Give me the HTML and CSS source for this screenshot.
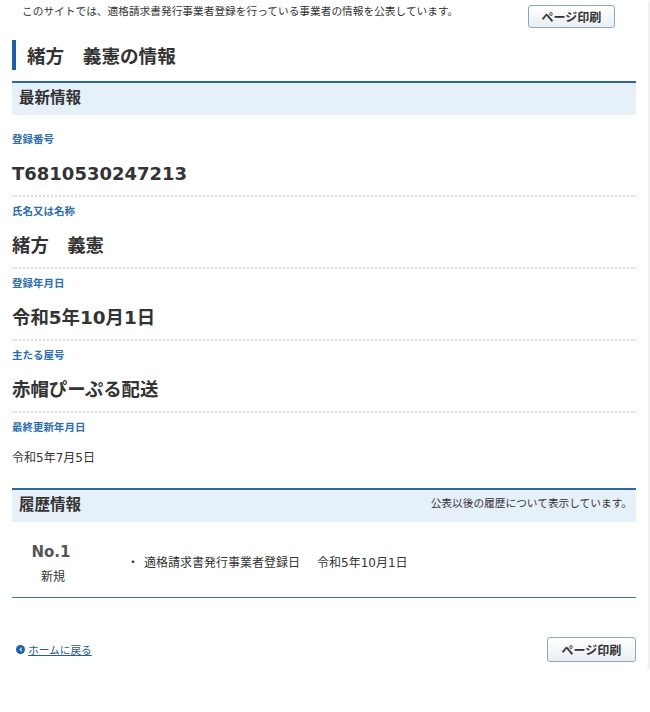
FILE: index.html
```html
<!DOCTYPE html>
<html lang="ja">
<head>
<meta charset="utf-8">
<title>公表情報</title>
<link rel="stylesheet" href="styles.css">
</head>
<body>

<div class="container">
  <div class="top-bar">
    <p class="lead">このサイトでは、適格請求書発行事業者登録を行っている事業者の情報を公表しています。</p>
    <button class="print-btn top-print" type="button">ページ印刷</button>
  </div>

  <h2 class="page-title">緒方　義憲の情報</h2>

  <div class="section-head">
    <h3>最新情報</h3>
  </div>

  <dl class="info-list">
    <div class="info-item">
      <dt>登録番号</dt>
      <dd class="big num">T6810530247213</dd>
    </div>
    <div class="info-item">
      <dt>氏名又は名称</dt>
      <dd class="big">緒方　義憲</dd>
    </div>
    <div class="info-item">
      <dt>登録年月日</dt>
      <dd class="big">令和5年10月1日</dd>
    </div>
    <div class="info-item">
      <dt>主たる屋号</dt>
      <dd class="big">赤帽ぴーぷる配送</dd>
    </div>
    <div class="info-item last">
      <dt>最終更新年月日</dt>
      <dd class="small">令和5年7月5日</dd>
    </div>
  </dl>

  <div class="section-head history-head">
    <h3>履歴情報</h3>
    <span class="note">公表以後の履歴について表示しています。</span>
  </div>

  <div class="history-row">
    <div class="history-no">
      <div class="no">No.1</div>
      <div class="kind">新規</div>
    </div>
    <div class="history-text">
      <span class="dot">・</span>適格請求書発行事業者登録日<span class="date">令和5年10月1日</span>
    </div>
  </div>

  <div class="footer">
    <a class="back-link" href="#"><span class="back-icon"></span>ホームに戻る</a>
    <button class="print-btn bottom-print" type="button">ページ印刷</button>
  </div>
</div>

</body>
</html>
```

FILE: styles.css
```css
body {
  font-family: "DejaVu Sans", "Noto Sans CJK JP", sans-serif;
  background-color: #fff;
  color: #333;
  margin: 0;
  padding: 0;
}

.container {
  width: 624px;
  padding: 0 12px 8px;
  background-color: #fff;
  border-radius: 0 0 4px 0;
  box-shadow: 1px 1px 4px rgba(0, 0, 0, 0.12);
}

.top-bar {
  display: flex;
  justify-content: space-between;
  align-items: flex-start;
  padding-top: 5px;
}

.lead {
  margin: 0 0 0 10px;
  font-size: 10.7px;
  line-height: 14px;
}

.print-btn {
  font-family: "Noto Sans CJK JP", sans-serif;
  font-weight: bold;
  font-size: 12px;
  color: #333;
  background: linear-gradient(#ffffff, #e9eef3);
  border: 1px solid #8ba8bf;
  border-radius: 3px;
  cursor: pointer;
  padding: 0;
}

.top-print {
  width: 87px;
  height: 23px;
  margin-right: 21px;
}

.bottom-print {
  width: 89px;
  height: 25px;
}

.page-title {
  margin: 12px 0 0;
  padding-left: 11px;
  border-left: 4px solid #1f5fa6;
  font-size: 18.6px;
  line-height: 30px;
  font-family: "Noto Sans CJK JP", sans-serif;
}

.section-head {
  display: flex;
  justify-content: space-between;
  align-items: center;
  box-sizing: border-box;
  margin-top: 11px;
  height: 34px;
  padding: 0 4px 7px 7px;
  background-color: #e6f0f9;
  border-top: 2px solid #2b67a2;
}

.section-head h3 {
  margin: 0;
  font-size: 15.5px;
  font-family: "Noto Sans CJK JP", sans-serif;
}

.note {
  font-size: 10.7px;
}

.info-list {
  margin: 10px 0 0;
}

.info-item {
  padding: 6px 0 9px;
  border-bottom: 2px dotted #dcdcdc;
}

.info-item dt {
  font-size: 10.5px;
  line-height: 16px;
  font-weight: bold;
  color: #2f6ead;
  font-family: "Noto Sans CJK JP", sans-serif;
}

.info-item dd {
  margin: 0;
}

.big {
  margin-top: 14px !important;
  font-size: 18.4px;
  line-height: 25px;
  font-weight: bold;
}

.big.num {
  font-size: 18px;
}

.small {
  margin-top: 13px !important;
  font-size: 12px;
  line-height: 20px;
}

.info-item.last {
  padding-bottom: 0;
  border-bottom: none;
}

.history-head {
  margin-top: 20px;
}

.history-row {
  display: flex;
  align-items: center;
  padding: 20px 0 10px;
  border-bottom: 1px solid #3f78b0;
}

.history-no {
  width: 82px;
  text-align: center;
}

.no {
  font-size: 15px;
  line-height: 20px;
  font-weight: bold;
  color: #555;
  padding-right: 4px;
}

.kind {
  margin-top: 5px;
  font-size: 12px;
  line-height: 20px;
}

.history-text {
  margin-left: 33px;
  margin-bottom: 4px;
  font-size: 12px;
  line-height: 20px;
}

.dot {
  margin-right: 5px;
}

.date {
  margin-left: 17px;
}

.footer {
  display: flex;
  justify-content: space-between;
  align-items: center;
  margin-top: 39px;
}

.back-link {
  display: flex;
  align-items: center;
  margin-left: 4px;
  font-size: 10.7px;
  color: #2a5b92;
  text-decoration: underline;
  font-family: "Noto Sans CJK JP", sans-serif;
}

.back-icon {
  position: relative;
  width: 9px;
  height: 9px;
  margin-right: 3px;
  border-radius: 50%;
  background-color: #2160a8;
}

.back-icon::after {
  content: "";
  position: absolute;
  left: 3.5px;
  top: 2.5px;
  width: 3px;
  height: 3px;
  border-left: 1.5px solid #fff;
  border-bottom: 1.5px solid #fff;
  transform: rotate(45deg);
  box-sizing: border-box;
}
```
